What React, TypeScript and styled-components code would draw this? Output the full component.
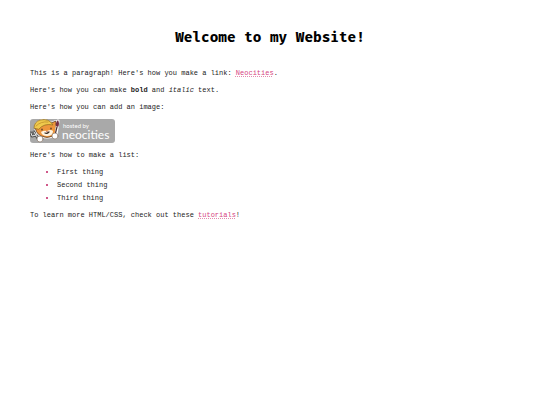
import React from "react";
import styled, { createGlobalStyle } from "styled-components";

const GlobalStyle = createGlobalStyle`
  body {
    margin: 0;
    background: #fff;
    color: #1c1c1c;
    font-family: "Liberation Mono", monospace;
    font-size: 7px;
    line-height: 10px;
  }
`;

const Page = styled.main`
  padding: 28px 30px;
`;

const Title = styled.h1`
  margin: 0 0 20px;
  color: #000;
  font-family: "Fira Code", "Fira Mono", "DejaVu Sans Mono", monospace;
  font-size: 14px;
  line-height: 20px;
  text-align: center;
`;

const Content = styled.div`
  display: flex;
  flex-direction: column;
  align-items: flex-start;
  gap: 7px;
`;

const Paragraph = styled.p`
  margin: 0;
`;

const Link = styled.a`
  color: #d6457f;
  text-decoration: underline dotted #e58bae 1px;
  text-underline-offset: 1px;
`;

const List = styled.ul`
  display: flex;
  flex-direction: column;
  gap: 3px;
  margin: 0;
  padding: 0 0 0 16px;
  list-style: none;
`;

const Item = styled.li`
  display: flex;
  align-items: center;
  gap: 9px;

  &::before {
    content: "";
    width: 2px;
    height: 2px;
    background: #d0588a;
  }
`;

const BadgeLink = styled.a`
  display: block;
  line-height: 0;
`;

const BadgeText = styled.text`
  fill: #fff;
  font-family: Lato, sans-serif;
`;

function HostedBadge() {
  return (
    <svg width="85" height="24" viewBox="0 0 85 24" role="img" aria-label="Hosted by Neocities">
      <rect width="85" height="24" rx="3" fill="#a9a9a9" />
      <g strokeLinejoin="round" strokeLinecap="round">
        <path d="M4 13 9 21M1 14l1 3 4-1 1-4" fill="none" stroke="#555" strokeWidth="3" />
        <path d="M4 13 9 21M1 14l1 3 4-1 1-4" fill="none" stroke="#e5e5e5" strokeWidth="1" />
        <path d="M5 6Q9 1 14 1L21 4 26 2 26 9q1 5-3 8-6 3-12 0Q5 14 5 6Z" fill="#ee963c" stroke="#fff" strokeWidth="2" />
        <path d="M5 6Q9 1 14 1L21 4 26 2 26 9q1 5-3 8-6 3-12 0Q5 14 5 6Z" fill="#ee963c" stroke="#49311f" strokeWidth="0.7" />
        <path d="M4 9Q4 3 10 1q9-2 13 5-9-2-14 4Z" fill="#efc94c" stroke="#8d681e" strokeWidth="0.7" />
        <path d="M6 7q5-5 12-4" fill="none" stroke="#b98a26" strokeWidth="0.7" />
        <path d="M11 13q3-2 6-1 4-2 6 0 0 5-6 5-5 0-6-4Z" fill="#fff4df" />
        <path d="M12 10v1M21 9v1M15 14q2 1 4-1" fill="none" stroke="#392b24" strokeWidth="1.2" />
        <path d="m16 12 2 0-1 1Z" fill="#9d3328" />
        <path d="m28 2-2 14" stroke="#fff" strokeWidth="3" />
        <path d="m27 8-2 8" stroke="#4b3030" strokeWidth="1.2" />
        <path d="M28 1q2 4 0 7l-2-1q-1-3 2-6Z" fill="#743044" />
        <circle cx="10" cy="20" r="3" fill="#fff" stroke="#8c7a6b" strokeWidth="0.7" />
        <circle cx="25" cy="17" r="3" fill="#fff" stroke="#8c7a6b" strokeWidth="0.7" />
      </g>
      <BadgeText x="33" y="9" fontSize="6">hosted by</BadgeText>
      <BadgeText x="32" y="20" fontSize="12">neocities</BadgeText>
    </svg>
  );
}

export default function App() {
  return (
    <>
      <GlobalStyle />
      <Page>
        <Title>Welcome to my Website!</Title>
        <Content>
          <Paragraph>
            This is a paragraph! Here's how you make a link: <Link href="https://neocities.org">Neocities</Link>.
          </Paragraph>
          <Paragraph>
            Here's how you can make <strong>bold</strong> and <em>italic</em> text.
          </Paragraph>
          <Paragraph>Here's how you can add an image:</Paragraph>
          <BadgeLink href="https://neocities.org">
            <HostedBadge />
          </BadgeLink>
          <Paragraph>Here's how to make a list:</Paragraph>
          <List>
            <Item>First thing</Item>
            <Item>Second thing</Item>
            <Item>Third thing</Item>
          </List>
          <Paragraph>
            To learn more HTML/CSS, check out these <Link href="https://neocities.org/tutorials">tutorials</Link>!
          </Paragraph>
        </Content>
      </Page>
    </>
  );
}
